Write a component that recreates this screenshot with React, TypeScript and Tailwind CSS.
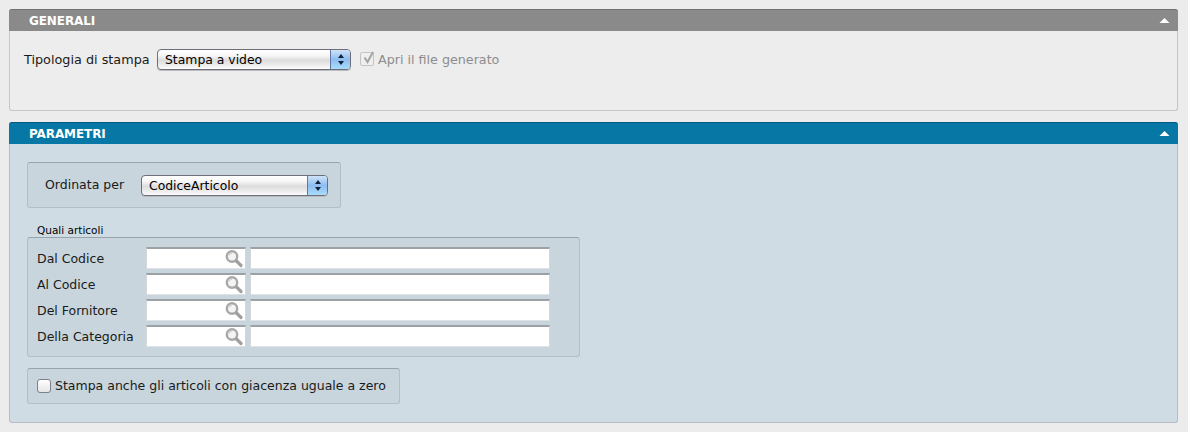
const FONT = "font-['DejaVu_Sans',sans-serif]";

const ROWS = ['Dal Codice', 'Al Codice', 'Del Fornitore', 'Della Categoria'];

function Caret() {
  return (
    <svg width="11" height="7" viewBox="0 0 11 7" aria-hidden="true">
      <path d="M5.5 1 L10.5 6 L0.5 6 Z" fill="#fff" />
    </svg>
  );
}

function Lens() {
  return (
    <svg width="19" height="18" viewBox="0 0 19 18" className="mr-[1px]" aria-hidden="true">
      <circle cx="7" cy="6.5" r="5.2" fill="#f4f4f4" stroke="#a8a8a8" strokeWidth="2.4" />
      <path d="M4 5.5 A3.4 3.4 0 0 1 7 3.1" fill="none" stroke="#d0d0d0" strokeWidth="1.2" />
      <path d="M11.5 11 L16 15.5" stroke="#a0a0a0" strokeWidth="3.2" strokeLinecap="round" />
    </svg>
  );
}

function Panel({ title, tone, body, className, children }: { title: string; tone: string; body: string; className: string; children: React.ReactNode }) {
  return (
    <section className={`flex flex-col rounded-[3px] border-x border-b ${body} ${className}`}>
      <header className={`-mx-px flex h-[22px] shrink-0 items-center justify-between rounded-t-[3px] border-t pl-[20px] pr-[8px] ${tone}`}>
        <h2 className="text-[12px] font-bold tracking-[-0.1px] text-white">{title}</h2>
        <Caret />
      </header>
      {children}
    </section>
  );
}

function SelectBox({ value, width }: { value: string; width: string }) {
  return (
    <div className={`flex h-[21px] items-stretch overflow-hidden rounded-[4px] border border-[#6e6e78] bg-[linear-gradient(#ffffff,#f6f6f6_30%,#dcdcdc_55%,#fbfbfb)] shadow-[0_1px_0_#b8bcc0] ${width}`}>
      <span className="flex-1 pl-[7px] text-[12.4px] leading-[19px] text-black">{value}</span>
      <span className="flex w-[20px] flex-col items-center justify-center gap-[3px] border-l border-[#5f78a8] bg-[linear-gradient(#cfe2f7,#8dbdf0_50%,#a8dcfb)]">
        <svg width="6" height="4" viewBox="0 0 6 4" aria-hidden="true"><path d="M3 0 L6 4 L0 4 Z" fill="#10203a" /></svg>
        <svg width="6" height="4" viewBox="0 0 6 4" aria-hidden="true"><path d="M3 4 L6 0 L0 0 Z" fill="#10203a" /></svg>
      </span>
    </div>
  );
}

function Field({ width, lookup }: { width: string; lookup?: boolean }) {
  return (
    <div className={`flex h-[22px] items-center justify-end border-x border-b border-t-2 border-x-[#d4d8da] border-b-[#dfe3e5] border-t-[#9ba1a5] bg-white ${width}`}>
      {lookup && <Lens />}
    </div>
  );
}

export default function App() {
  return (
    <div className={`flex h-[432px] w-[1188px] flex-col gap-[11px] overflow-hidden bg-[#ececec] pl-[9px] pr-[10px] pt-[9px] ${FONT}`}>
      <Panel
        title="GENERALI"
        tone="border-[#6f6f6f] bg-[#8a8a8a]"
        body="border-[#c6c6c6] bg-[#ededed]"
        className="h-[102px]"
      >
        <div className="flex items-center pl-[14px] pt-[18px]">
          <span className="w-[133px] text-[12.8px] text-[#1a1a1a]">Tipologia di stampa</span>
          <SelectBox value="Stampa a video" width="w-[194px]" />
          <span className="ml-[9px] flex items-center gap-[4px] text-[12.7px] text-[#8c8c8c]">
            <span className="relative h-[14px] w-[14px] rounded-[2px] border border-[#c4c4c4] bg-[#efefef]">
              <svg className="absolute -right-[2px] -top-[3px]" width="14" height="15" viewBox="0 0 14 15" aria-hidden="true">
                <path d="M3.5 7.5 L6.5 12 L12 2" fill="none" stroke="#a4a4a4" strokeWidth="2" />
              </svg>
            </span>
            Apri il file generato
          </span>
        </div>
      </Panel>

      <Panel
        title="PARAMETRI"
        tone="border-[#05597f] bg-[#0777a6]"
        body="border-[#b4bec4] bg-[#cfdce3]"
        className="h-[301px]"
      >
        <div className="flex flex-col items-start pl-[17px] pt-[18px]">
          <div className="flex h-[46px] w-[314px] items-center rounded-[3px] border border-[#b3bfc6] border-t-[#98a4ab] bg-[#c8d5dc] pl-[17px]">
            <span className="w-[96px] text-[12.5px] text-[#1a1a1a]">Ordinata per</span>
            <SelectBox value="CodiceArticolo" width="w-[187px]" />
          </div>

          <span className="mt-[15px] ml-[10px] h-[14px] text-[10.5px] leading-[15px] text-black">Quali articoli</span>

          <div className="flex w-[553px] flex-col gap-[4px] rounded-[3px] border border-[#b3bfc6] border-t-[#98a4ab] bg-[#c8d5dc] pb-[9px] pl-[9px] pt-[9px]">
            {ROWS.map((row) => (
              <div key={row} className="flex items-center">
                <span className="w-[109px] pt-[2px] text-[12.5px] text-[#1a1a1a]">{row}</span>
                <Field width="w-[100px]" lookup />
                <span className="w-[4px]" />
                <Field width="w-[300px]" />
              </div>
            ))}
          </div>

          <div className="mt-[11px] flex h-[36px] w-[373px] items-center gap-[4px] rounded-[3px] border border-[#b3bfc6] border-t-[#98a4ab] bg-[#c8d5dc] pl-[9px]">
            <span className="h-[14px] w-[14px] shrink-0 rounded-[3px] border border-[#7d8186] bg-[linear-gradient(#ffffff,#e4e4e4)]" />
            <span className="whitespace-nowrap text-[12.5px] text-[#1a1a1a]">Stampa anche gli articoli con giacenza uguale a zero</span>
          </div>
        </div>
      </Panel>
    </div>
  );
}
